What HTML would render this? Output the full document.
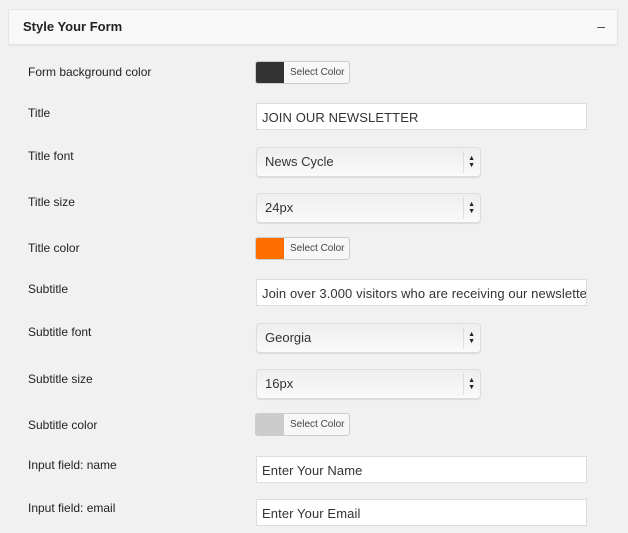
<!DOCTYPE html>
<html><head><style>
body{margin:0;width:628px;height:533px;background:#f1f1f1;font-family:"Liberation Sans",sans-serif;position:relative;overflow:hidden;color:#222}
.hdr{position:absolute;left:8px;top:9px;width:608px;height:34px;background:#f8f8f8;border:1px solid #e5e5e5;box-shadow:0 1px 1px rgba(0,0,0,.05)}
.hdr b{position:absolute;left:14px;top:9px;font-size:13px;color:#222}
.hdr span{position:absolute;right:12px;top:8px;font-size:14px;color:#444}
.l{position:absolute;left:28px;font-size:12px;color:#222}
.cb{position:absolute;left:255px;width:95px;height:23px;border:1px solid #ccc;border-radius:3px;background:#f7f7f7;box-sizing:border-box;overflow:hidden}
.cb i{position:absolute;left:0;top:0;width:28px;height:23px}
.cb span{position:absolute;left:34px;top:5px;font-size:10px;color:#444}
.in{position:absolute;left:256px;width:331px;height:27px;background:#fff;border:1px solid #ddd;box-sizing:border-box;font-size:13px;padding:6px 0 0 5px;white-space:nowrap;overflow:hidden;color:#333;letter-spacing:.1px}
.sel{position:absolute;left:256px;width:225px;height:30px;border:1px solid #ddd;border-radius:4px;box-sizing:border-box;background:linear-gradient(#eee,#fafafa);font-size:13px;padding:6px 0 0 8px;color:#333;box-shadow:0 1px 1px rgba(0,0,0,.1)}
.sel:after{content:"";position:absolute;right:16px;top:3px;height:22px;border-left:1px solid #ddd}
.sel em{position:absolute;right:5px;top:7px;font-size:7px;line-height:7px;font-style:normal;color:#222}
</style></head><body>
<div class="hdr"><b>Style Your Form</b><span>–</span></div>
<div class="l" style="top:65px">Form background color</div>
<div class="cb" style="top:61px"><i style="background:#333"></i><span>Select Color</span></div>
<div class="l" style="top:106px">Title</div>
<div class="in" style="top:103px">JOIN OUR NEWSLETTER</div>
<div class="l" style="top:149px">Title font</div>
<div class="sel" style="top:147px">News Cycle<em>▲<br>▼</em></div>
<div class="l" style="top:195px">Title size</div>
<div class="sel" style="top:193px">24px<em>▲<br>▼</em></div>
<div class="l" style="top:241px">Title color</div>
<div class="cb" style="top:237px"><i style="background:#ff6e00"></i><span>Select Color</span></div>
<div class="l" style="top:282px">Subtitle</div>
<div class="in" style="top:279px">Join over 3.000 visitors who are receiving our newsletter</div>
<div class="l" style="top:325px">Subtitle font</div>
<div class="sel" style="top:323px">Georgia<em>▲<br>▼</em></div>
<div class="l" style="top:372px">Subtitle size</div>
<div class="sel" style="top:369px">16px<em>▲<br>▼</em></div>
<div class="l" style="top:418px">Subtitle color</div>
<div class="cb" style="top:413px"><i style="background:#ccc"></i><span>Select Color</span></div>
<div class="l" style="top:458px">Input field: name</div>
<div class="in" style="top:456px">Enter Your Name</div>
<div class="l" style="top:501px">Input field: email</div>
<div class="in" style="top:499px">Enter Your Email</div>
</body></html>
